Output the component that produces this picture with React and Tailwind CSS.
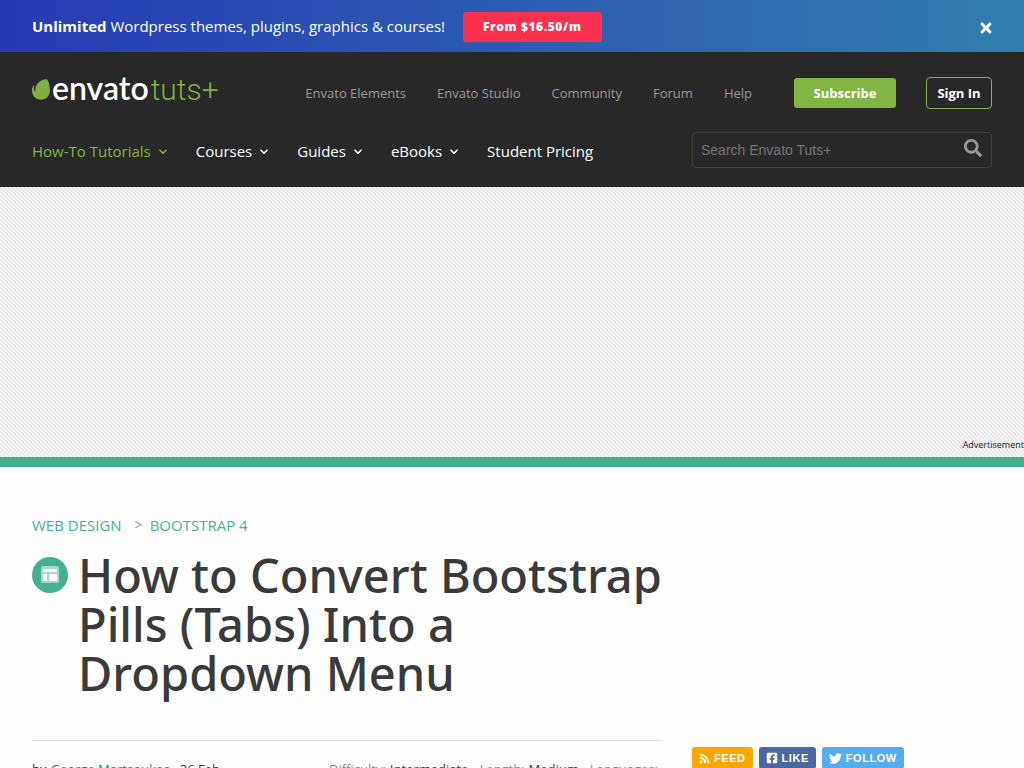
import React from "react";
import { FaTimes, FaSearch, FaRss, FaFacebookSquare, FaTwitter } from "react-icons/fa";

const topLinks = ["Envato Elements", "Envato Studio", "Community", "Forum", "Help"];
const mainLinks = [
  { label: "How-To Tutorials", menu: true, active: true },
  { label: "Courses", menu: true },
  { label: "Guides", menu: true },
  { label: "eBooks", menu: true },
  { label: "Student Pricing" },
];

function Chevron() {
  return (
    <svg viewBox="0 0 8 6" className="mt-[2px] h-[6px] w-2" fill="none" stroke="currentColor" strokeWidth="1.6" strokeLinecap="round" strokeLinejoin="round" aria-hidden="true">
      <path d="M1 1.2 L4 4.2 L7 1.2" />
    </svg>
  );
}

function Logo() {
  return (
    <a href="#home" aria-label="Envato Tuts+" className="flex items-center gap-[2px]">
      <svg viewBox="0 0 18 21" className="h-[21px] w-[18px]" aria-hidden="true">
        <path fill="#7eb142" d="M14.6.3c-.8-.4-3 0-5.6 1.4C4.600 4.100 3.200 8 3.300 12.200c0 .3-.3.4-.5.2-1-1.700-1.100-3.500-.5-6.100.1-.3-.2-.5-.4-.3C.6 7.400 0 9.400 0 11.800c0 5 4 9 9 9s8.800-3.900 8.900-8.700C18.100 6.200 16.300 1.200 14.600.3z" />
      </svg>
      <span className="flex items-baseline gap-[2px] leading-[30px]">
        <span className="font-[Lato,sans-serif] text-[32px] font-semibold text-white">envato</span>
        <span className="font-[Roboto,sans-serif] text-[30px] font-light text-[#7eb142]">tuts+</span>
      </span>
    </a>
  );
}

export default function App() {
  return (
    <div className="min-h-screen bg-[#fdfdfd] font-['Open_Sans','Noto_Sans',sans-serif] text-[#3a3a3a]">
      <div className="flex h-[52px] items-center justify-between bg-linear-to-r from-[#2739b4] via-[#2e62b1] via-60% to-[#317eaf] px-8 text-white">
        <div className="flex items-center gap-[18px] pt-[2px]">
          <p className="pb-[2px] text-[15px] leading-5">
            <strong>Unlimited</strong> Wordpress themes, plugins, graphics &amp; courses!
          </p>
          <a href="#pricing" className="rounded-[3px] bg-[#fa304e] px-5 text-xs leading-[30px] font-extrabold tracking-wider">From $16.50/m</a>
        </div>
        <button type="button" aria-label="Close" className="mt-1">
          <FaTimes className="h-4 w-3" />
        </button>
      </div>

      <header className="bg-[#282828] px-8 pt-[21px] pb-[19px]">
        <div className="flex h-10 items-start justify-between">
          <Logo />
          <div className="flex items-center gap-[30px] pt-1 text-[13px] text-[#999]">
            <nav aria-label="Envato sites" className="flex gap-[31px] pt-[2px]">
              {topLinks.map((label) => (
                <a key={label} href="#top">{label}</a>
              ))}
            </nav>
            <a href="#subscribe" className="ml-3 w-[102px] rounded-[3px] bg-[#82b541] text-center leading-[30px] font-bold text-white">Subscribe</a>
            <a href="#signin" className="w-[66px] rounded-[4px] border border-[#82b541] text-center leading-[30px] font-bold text-white">Sign In</a>
          </div>
        </div>
        <div className="mt-[19px] flex items-center justify-between">
          <nav aria-label="Main" className="flex items-center gap-[29px] pt-[2px] text-[15px] leading-6">
            {mainLinks.map((item) => (
              <a key={item.label} href="#nav" className={item.active ? "flex items-center gap-2 text-[#82b541]" : "flex items-center gap-2 text-white"}>
                {item.label}
                {item.menu && <Chevron />}
              </a>
            ))}
          </nav>
          <form className="flex h-9 w-[300px] items-center rounded-[4px] border border-[#404040] px-2">
            <input type="text" aria-label="Search Envato Tuts+" placeholder="Search Envato Tuts+" className="min-w-0 flex-1 bg-transparent font-['Liberation_Sans',Arial,sans-serif] text-sm text-white placeholder:text-[#757575]" />
            <button type="button" aria-label="Search" className="pr-px pb-1 text-[#999]">
              <FaSearch className="h-[18px] w-[18px]" />
            </button>
          </form>
        </div>
      </header>

      <div className="flex h-[280px] items-end justify-end border-b-[10px] border-[#48b092] bg-[linear-gradient(45deg,#f5f5f5_25%,#e8e8e8_25%,#e8e8e8_50%,#f5f5f5_50%,#f5f5f5_75%,#e8e8e8_75%)] bg-size-[4px_4px]">
        <span className="pb-1 text-[9px] leading-4 text-[#222]">Advertisement</span>
      </div>

      <main className="grid grid-cols-[minmax(0,1fr)_300px] gap-[30px] px-8 pt-12">
        <article>
          <nav aria-label="Breadcrumb" className="flex items-center gap-[7px] text-[15px] leading-5 text-[#48b092]">
            <a href="#web-design" className="pr-[6px]">WEB DESIGN</a>
            <span className="text-sm leading-5 text-[#999]">&gt;</span>
            <a href="#bootstrap">BOOTSTRAP 4</a>
          </nav>
          <div className="mt-4 flex gap-[10px]">
            <svg viewBox="0 0 36 36" className="mt-[6px] h-9 w-9 shrink-0" aria-hidden="true">
              <circle cx="18" cy="18" r="18" fill="#48b092" />
              <rect x="9" y="9" width="18" height="17" rx="2" fill="#a5d8c9" />
              <path fill="#fff" d="M11 12h14v3H11zM11 17h4v7h-4zM17 17h8v7h-8z" />
            </svg>
            <h1 className="font-['Noto_Sans','Open_Sans',sans-serif] text-[47px] leading-[49px] font-medium">
              How to Convert Bootstrap Pills (Tabs) Into a Dropdown Menu
            </h1>
          </div>
          <div className="mt-[42px] flex justify-between border-t border-[#ddd] pt-[18px] text-[13px] leading-5">
            <p className="flex gap-1">by <a href="#author" className="text-[#0085b6]">George Martsoukos</a><time className="ml-[6px]">26 Feb</time></p>
            <dl className="flex gap-[11px] pr-1">
              <div className="flex gap-1"><dt className="text-[#888]">Difficulty:</dt><dd>Intermediate</dd></div>
              <div className="flex gap-1"><dt className="text-[#888]">Length:</dt><dd>Medium</dd></div>
              <div className="flex gap-1"><dt className="text-[#888]">Languages:</dt></div>
            </dl>
          </div>
        </article>
        <aside className="flex items-start gap-[6px] pt-[232px] font-['Liberation_Sans',Arial,sans-serif] text-[11px] leading-[22px] font-bold tracking-wider text-white">
          <a href="#feed" className="flex items-center gap-1 rounded-[3px] bg-[#ffa500] px-[7px]"><FaRss className="h-[11px] w-[11px]" />FEED</a>
          <a href="#like" className="flex items-center gap-1 rounded-[3px] bg-[#4c67a1] px-[7px]"><FaFacebookSquare className="h-3 w-3" />LIKE</a>
          <a href="#follow" className="flex items-center gap-1 rounded-[3px] bg-[#55acee] px-[7px]"><FaTwitter className="h-[13px] w-[13px]" />FOLLOW</a>
        </aside>
      </main>
    </div>
  );
}
